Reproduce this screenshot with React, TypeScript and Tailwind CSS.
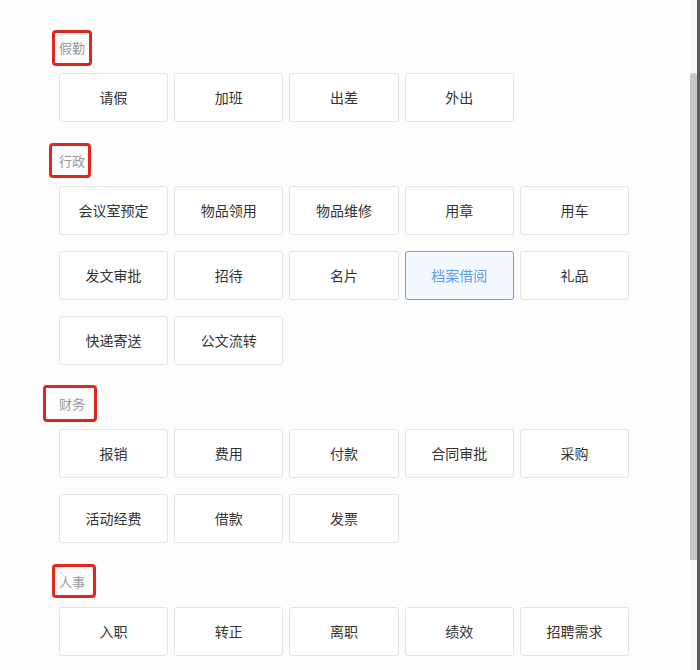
const sections: { title: string; items: string[]; box: string }[] = [
  {
    title: "假勤",
    items: ["请假", "加班", "出差", "外出"],
    box: "left-[-7px] top-[-8px] w-[40px] h-[36px]",
  },
  {
    title: "行政",
    items: ["会议室预定", "物品领用", "物品维修", "用章", "用车", "发文审批", "招待", "名片", "档案借阅", "礼品", "快递寄送", "公文流转"],
    box: "left-[-10px] top-[-8px] w-[42px] h-[35px]",
  },
  {
    title: "财务",
    items: ["报销", "费用", "付款", "合同审批", "采购", "活动经费", "借款", "发票"],
    box: "left-[-16px] top-[-9px] w-[54px] h-[37px]",
  },
  {
    title: "人事",
    items: ["入职", "转正", "离职", "绩效", "招聘需求"],
    box: "left-[-7px] top-[-8px] w-[44px] h-[34px]",
  },
];

const active = "档案借阅";

export default function App() {
  return (
    <div className="flex h-[670px] w-[700px] overflow-hidden bg-[#fdfdfd] font-['Noto_Sans_CJK_SC',sans-serif]">
      <div className="flex-1 pl-[59px] pt-[38px]">
        {sections.map((s, i) => (
          <div key={s.title} className={i > 0 ? "mt-[29px]" : ""}>
            <div className="relative block h-5 w-fit text-[13px] leading-5 text-[#999]">
              {s.title}
              <span className={`absolute rounded-[4px] border-[3px] border-[#e3261d] ${s.box}`} />
            </div>
            <div className="mt-[15px] grid w-[570px] grid-cols-5 gap-x-[6px] gap-y-4">
              {s.items.map((item) => (
                <div
                  key={item}
                  className={
                    item === active
                      ? "flex h-[49px] items-center justify-center rounded-[3px] border border-[#5ea3ef] bg-[#f3f9ff] text-[14px] text-[#5b9ef0]"
                      : "flex h-[49px] items-center justify-center rounded-[3px] border border-[#e4e4e4] bg-white text-[14px] text-[#333]"
                  }
                >
                  {item}
                </div>
              ))}
            </div>
          </div>
        ))}
      </div>
      <div className="flex w-[10px] shrink-0">
        <div className="w-[7px] bg-[#f8f8f8] pt-[73px]">
          <div className="h-[487px] rounded-t-[3px] bg-[#c8c8c8]" />
        </div>
        <div className="w-[3px] bg-[#5a5a5a]" />
      </div>
    </div>
  );
}
